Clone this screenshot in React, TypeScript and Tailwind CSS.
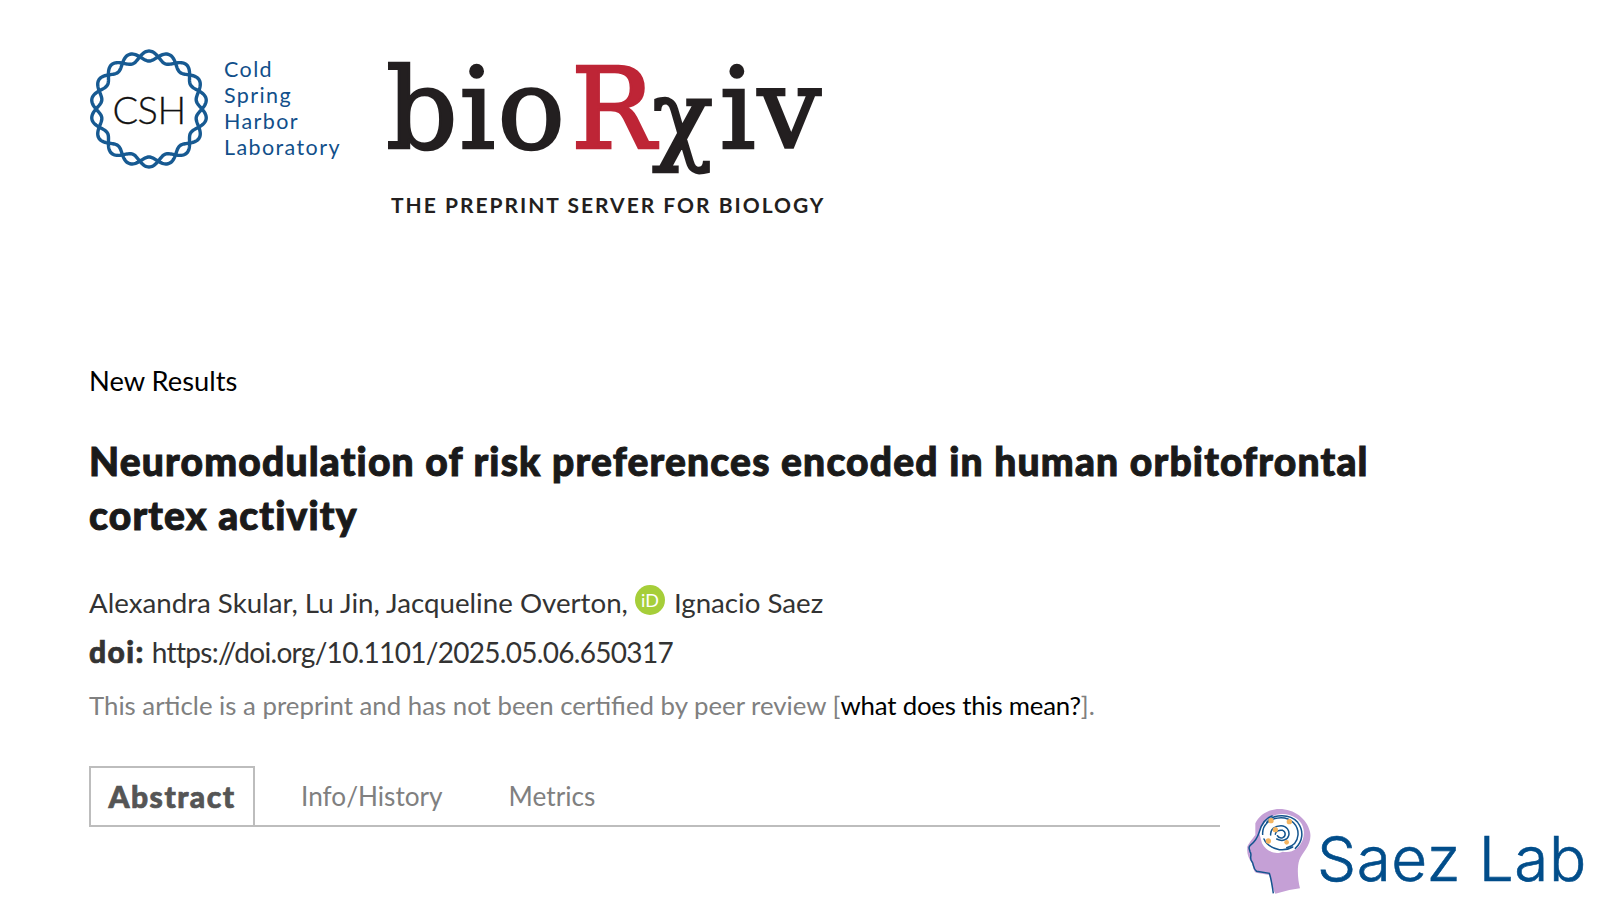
import React from 'react';

const gill = "font-['Lato','Open_Sans',sans-serif]";

// two strands wound around the ring
const strand = (cx: number, cy: number, r: number, amp: number, turns: number, sign: number) => {
  const pts: string[] = [];
  for (let i = 0; i <= 360; i++) {
    const t = (i / 360) * Math.PI * 2;
    const rr = r + sign * amp * Math.sin(turns * t);
    pts.push(`${(cx + rr * Math.cos(t)).toFixed(2)},${(cy + rr * Math.sin(t)).toFixed(2)}`);
  }
  return 'M' + pts.join('L') + 'Z';
};

const CshLogo = () => (
  <div className="flex items-center -ml-[2px]">
    <div className="relative w-[124px] h-[124px]">
      <svg width="124" height="124" viewBox="0 0 124 124">
        <path d={strand(62, 62, 53, 5, 9, 1)} fill="none" stroke="#175a92" strokeWidth="3.4" />
        <path d={strand(62, 62, 53, 5, 9, -1)} fill="none" stroke="#175a92" strokeWidth="3.4" />
      </svg>
      <span className="absolute inset-0 flex items-center justify-center font-['Lato',sans-serif] font-light [-webkit-text-stroke:0.3px_currentColor] text-[38px] text-[#111] tracking-[-0.5px]">
        CSH
      </span>
    </div>
    <div className="ml-[13px] -mt-[2px] font-['Lato',sans-serif] text-[#114f8a] text-[21.5px] leading-[26px] tracking-[1.4px]">
      <div>Cold</div>
      <div>Spring</div>
      <div>Harbor</div>
      <div>Laboratory</div>
    </div>
  </div>
);

const BiorxivLogo = () => (
  <div className="flex flex-col w-[440px]">
    <div className="h-[118px] mt-[5px] -ml-[5px] font-['DejaVu_Serif',serif] text-[#231f20] text-[112px] leading-[118px] tracking-[2px] [-webkit-text-stroke:2.5px_currentColor] flex whitespace-nowrap">
      <span>bio</span>
      <span className="ml-[4px] text-[#be2536]">R</span>
      <span className="translate-y-[8px] -ml-[5px] text-[100px]">χ</span>
      <span className="ml-[5px]">iv</span>
    </div>
    <div className="mt-[24px] font-['Lato',sans-serif] font-bold text-[21px] leading-[26px] text-[#231f20] tracking-[2px] whitespace-nowrap">
      THE PREPRINT SERVER FOR BIOLOGY
    </div>
  </div>
);

const SaezLogo = () => (
  <div className="absolute left-[1236px] top-[805px] flex items-end">
    <svg width="80" height="92" viewBox="0 0 240 276">
      <path
        d="M58 55 C70 28 100 12 130 12 C175 12 212 40 222 80 C230 118 200 140 190 165 C182 190 186 225 192 250 L160 255 L118 266 C108 250 104 225 100 210 L60 203 C50 195 52 180 45 170 C38 160 32 145 34 130 C30 125 50 100 58 90 Z"
        fill="#c5a0d6"
      />
      <path
        d="M70 85 C85 30 130 22 160 30 C195 40 212 70 200 105 C190 130 170 145 140 140 C120 150 90 140 78 115 Z"
        fill="#fff"
      />
      <path
        d="M112 265 C108 240 106 222 100 205 L62 199 C50 190 54 178 48 170 C38 158 50 150 42 140 C40 130 36 128 42 122 C55 112 64 100 70 80 C78 52 92 38 110 32"
        fill="none"
        stroke="#14558f"
        strokeWidth="4.5"
      />
      <g fill="none" stroke="#14558f" strokeWidth="4.5" strokeLinecap="round">
        <path d="M92 52 C110 28 160 24 185 52 C205 78 200 110 178 130" />
        <path d="M80 88 C78 62 100 38 135 38 C165 38 188 62 186 90 C184 112 170 124 152 128" />
        <path d="M104 90 C102 72 118 62 135 62 C152 62 162 78 158 92 C154 106 138 110 122 102" />
        <path d="M118 88 C118 78 130 74 140 76 C150 80 150 94 140 98 C132 100 126 96 124 92" />
        <path d="M84 102 C92 122 112 130 130 134 C145 136 160 132 170 126" />
      </g>
      <g fill="#f4b45f">
        <circle cx="105" cy="47" r="8" />
        <circle cx="160" cy="50" r="8" />
        <circle cx="118" cy="74" r="8" />
        <circle cx="97" cy="108" r="8" />
        <circle cx="152" cy="112" r="7" />
      </g>
    </svg>
    <span className="ml-[1px] mb-[6px] font-['Inter',sans-serif] font-light text-[62px] leading-[64px] tracking-[0.5px] [-webkit-text-stroke:0.6px_currentColor] text-[#014d8a] whitespace-nowrap">
      Saez Lab
    </span>
  </div>
);

const OrcidBadge = () => (
  <span className="inline-flex items-center justify-center w-[30px] h-[30px] rounded-full bg-[#a6ce39] text-white text-[18px] leading-none align-[6px] mr-[9px]">
    iD
  </span>
);

export default function App() {
  return (
    <div className={`relative w-[1600px] h-[900px] bg-white overflow-hidden pl-[89px] ${gill}`}>
      <div className="flex items-start pt-[47px] h-[350px]">
        <CshLogo />
        <div className="ml-[50px] -mt-[2px]">
          <BiorxivLogo />
        </div>
      </div>

      <div className="text-[27.3px] leading-[34px] text-black mt-[14px]">New Results</div>

      <h1 className="mt-[36px] text-[39px] leading-[54px] font-black tracking-[1.18px] [-webkit-text-stroke:1px_currentColor] text-[#1a1a1a] w-[1300px]">
        Neuromodulation of risk preferences encoded in human orbitofrontal cortex activity
      </h1>

      <div className="mt-[37px] text-[27.7px] leading-[48px] text-[#333] h-[48px]">
        Alexandra Skular, Lu Jin, Jacqueline Overton, <OrcidBadge />Ignacio Saez
      </div>
      <div className="text-[28px] leading-[48px] text-[#333]">
        <span className="font-black text-[30px] tracking-[1.4px] [-webkit-text-stroke:0.7px_currentColor]">doi:</span>{' '}
        <span className="tracking-[-0.7px]">https://doi.org/10.1101/2025.05.06.650317</span>
      </div>
      <div className="mt-[9px] text-[25.8px] leading-[40px] text-[#808080]">
        This article is a preprint and has not been certified by peer review [<span className="text-black tracking-[-0.2px]">what does this mean?</span>].
      </div>

      <div className="mt-[41px] w-[1131px] h-[61px] flex border-b-2 border-[#bdbdbd] text-[26.2px]">
        <div className="w-[166px] h-[61px] border-2 border-[#bdbdbd] flex items-center justify-center font-black text-[30px] tracking-[1.5px] [-webkit-text-stroke:0.7px_currentColor] text-[#555]">
          Abstract
        </div>
        <div className="ml-[46px] h-[61px] flex items-center text-[#808080]">Info/History</div>
        <div className="ml-[66px] h-[61px] flex items-center text-[#808080]">Metrics</div>
      </div>

      <SaezLogo />
    </div>
  );
}
